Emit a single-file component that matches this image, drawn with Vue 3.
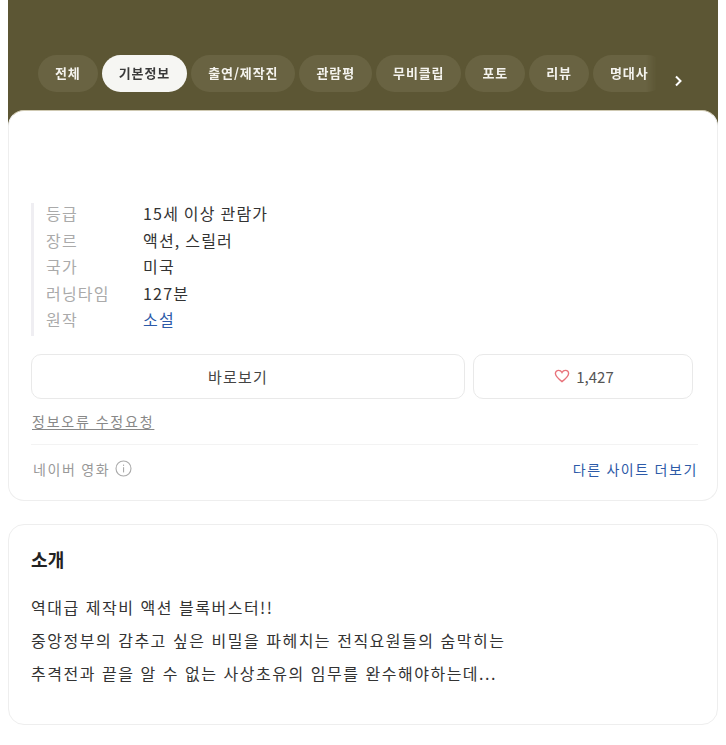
<template>
  <div class="page">
    <header class="hero">
      <div class="tabs-row">
        <nav class="tabs">
          <a v-for="tab in tabs" :key="tab" class="tab" :class="{ active: tab === activeTab }">{{ tab }}</a>
        </nav>
        <svg class="next" width="9" height="12" viewBox="0 0 9 12">
          <path d="M2 1.5 L6.5 6 L2 10.5" fill="none" stroke="#fff" stroke-width="2" />
        </svg>
      </div>
    </header>

    <section class="card info-card">
      <dl class="info">
        <div v-for="row in infoRows" :key="row.label" class="info-row">
          <dt>{{ row.label }}</dt>
          <dd :class="row.cls">{{ row.value }}</dd>
        </div>
      </dl>

      <div class="actions">
        <button class="btn watch">바로보기</button>
        <button class="btn like">
          <svg width="16" height="14" viewBox="0 0 16 14">
            <path d="M8 12.6 C3.5 9.2 1.4 7.1 1.4 4.6 C1.4 2.7 2.9 1.4 4.6 1.4 C6 1.4 7.3 2.2 8 3.5 C8.7 2.2 10 1.4 11.4 1.4 C13.1 1.4 14.6 2.7 14.6 4.6 C14.6 7.1 12.5 9.2 8 12.6 Z" fill="none" stroke="#e8737b" stroke-width="1.4" />
          </svg>
          <span>1,427</span>
        </button>
      </div>

      <a class="report">정보오류 수정요청</a>

      <div class="source">
        <span class="source-name">
          네이버 영화
          <svg width="17" height="17" viewBox="0 0 17 17">
            <circle cx="8.5" cy="8.5" r="7.5" fill="none" stroke="#aaa" stroke-width="1.1" />
            <rect x="8" y="7.2" width="1.1" height="5.2" fill="#aaa" />
            <rect x="8" y="4.6" width="1.1" height="1.3" fill="#aaa" />
          </svg>
        </span>
        <a class="more">다른 사이트 더보기</a>
      </div>
    </section>

    <section class="card intro-card">
      <h2>소개</h2>
      <p v-for="line in introLines" :key="line">{{ line }}</p>
    </section>
  </div>
</template>

<script setup>
const activeTab = '기본정보'
const tabs = ['전체', '기본정보', '출연/제작진', '관람평', '무비클립', '포토', '리뷰', '명대사']

const infoRows = [
  { label: '등급', value: '15세 이상 관람가' },
  { label: '장르', value: '액션, 스릴러' },
  { label: '국가', value: '미국' },
  { label: '러닝타임', value: '127분' },
  { label: '원작', value: '소설', cls: 'link' }
]

const introLines = [
  '역대급 제작비 액션 블록버스터!!',
  '중앙정부의 감추고 싶은 비밀을 파헤치는 전직요원들의 숨막히는',
  '추격전과 끝을 알 수 없는 사상초유의 임무를 완수해야하는데...'
]
</script>

<style>
html, body {
  margin: 0;
  background: #fff;
}
</style>

<style scoped>
.page {
  width: 726px;
  height: 745px;
  overflow: hidden;
  box-sizing: border-box;
  padding: 0 8px;
  font-family: "Noto Sans CJK KR", "Noto Sans", sans-serif;
  color: #222;
}

.hero {
  height: 126px;
  background: #5c5634;
  box-sizing: border-box;
  padding: 55px 0 0 30px;
}

.tabs-row {
  display: flex;
  align-items: flex-start;
}

.tabs {
  display: flex;
  gap: 4px;
  width: 619px;
  overflow: hidden;
  flex: none;
  -webkit-mask-image: linear-gradient(to right, #000 608px, transparent 619px);
  mask-image: linear-gradient(to right, #000 608px, transparent 619px);
}

.tab {
  flex: none;
  height: 37px;
  line-height: 35px;
  padding: 0 17px;
  border-radius: 19px;
  background: #696342;
  color: #f4f3ee;
  font-size: 13px;
  font-weight: 700;
  letter-spacing: 0.9px;
}

.tab.active {
  background: #f6f6f3;
  color: #3a3a3a;
}

.next {
  margin: 20px 0 0 17px;
  flex: none;
}

.card {
  background: #fff;
  border: 1px solid #eeeeee;
  border-radius: 16px;
  box-sizing: border-box;
}

.info-card {
  height: 391px;
  margin-top: -16px;
  padding: 92px 20px 0 22px;
  border-top: 1px solid #cfc9b2;
  position: relative;
}

.info {
  margin: 0;
  border-left: 3px solid #efeef2;
  padding-left: 12px;
}

.info-row {
  display: flex;
  height: 26.5px;
  line-height: 20px;
  font-size: 16px;
  letter-spacing: 1.2px;
}

dt {
  width: 97px;
  flex: none;
  color: #aaa;
}

dd {
  margin: 0;
  color: #333;
}

dd.link {
  color: #2d5aa8;
}

.actions {
  display: flex;
  gap: 8px;
  margin-top: 18px;
  width: 662px;
}

.btn {
  height: 45px;
  background: #fff;
  border: 1px solid #e9e9e9;
  border-radius: 10px;
  font-family: inherit;
  font-size: 15px;
  letter-spacing: 1.2px;
  color: #444;
  padding: 0;
}

.watch {
  width: 434px;
  flex: none;
  padding-right: 20px;
}

.like {
  flex: 1;
  display: flex;
  align-items: center;
  justify-content: center;
  gap: 6px;
  padding-left: 2px;
  color: #555;
  font-size: 15px;
  letter-spacing: 0;
}

.report {
  display: block;
  margin-top: 12px;
  padding-left: 1px;
  font-size: 14px;
  letter-spacing: 1.8px;
  line-height: 20px;
  color: #888;
  text-decoration: underline;
  text-underline-offset: 2px;
}

.source {
  display: flex;
  justify-content: space-between;
  align-items: center;
  margin-top: 13px;
  width: 667px;
  height: 48px;
  border-top: 1px solid #f3f3f3;
  font-size: 14px;
  letter-spacing: 1.6px;
}

.source-name {
  display: flex;
  align-items: center;
  gap: 5px;
  padding-left: 2px;
  color: #999;
}

.more {
  color: #2d5aa8;
}

.intro-card {
  height: 201px;
  margin-top: 23px;
  padding: 20px 22px 0;
}

h2 {
  margin: 0 0 18px;
  font-size: 18px;
  letter-spacing: 0.3px;
  line-height: 28px;
  font-weight: 700;
  color: #222;
}

p {
  margin: 0;
  font-size: 16px;
  letter-spacing: 1.5px;
  word-spacing: 1px;
  line-height: 33px;
  color: #333;
}
</style>
